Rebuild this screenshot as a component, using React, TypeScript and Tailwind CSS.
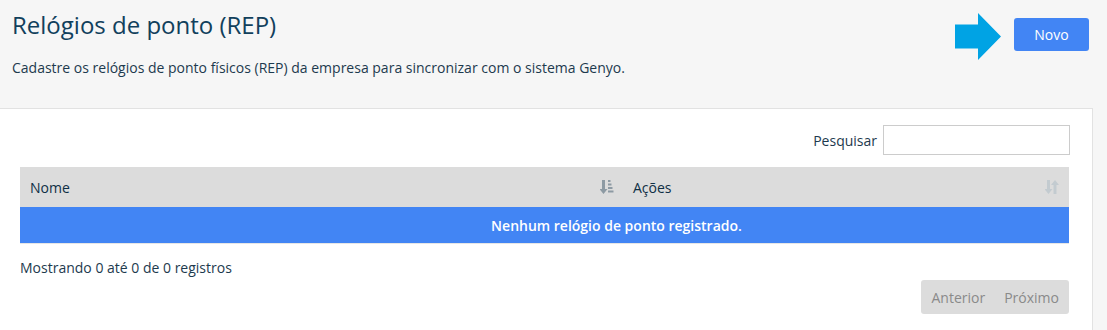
import React from 'react';

const SortAmountIcon: React.FC = () => (
  <svg width="14" height="16" viewBox="0 0 14 16" className="text-[#8d9aa3]">
    <path d="M1.5 1h3v9h2.5l-4 5-4-5h2.5z" fill="currentColor" transform="translate(0.5 0)" />
    <rect x="8" y="1" width="2.5" height="2" fill="currentColor" />
    <rect x="8" y="4.5" width="3.5" height="2" fill="currentColor" />
    <rect x="8" y="8" width="4.5" height="2" fill="currentColor" />
    <rect x="8" y="11.5" width="5.5" height="2" fill="currentColor" />
  </svg>
);

const SortBothIcon: React.FC = () => (
  <svg width="14" height="16" viewBox="0 0 14 16" className="text-[#c3cbd0]">
    <path d="M2 1h3v9h2.5l-4 5-4-5H2z" fill="currentColor" />
    <path d="M9 15h3V6h2.5l-4-5-4 5H9z" fill="currentColor" transform="translate(-0.5 0)" />
  </svg>
);

const Arrow: React.FC = () => (
  <svg width="47" height="47" viewBox="0 0 47 47">
    <path d="M0 11.5h23V0l23 23.5L23 47V35.5H0z" fill="#00a3e4" />
  </svg>
);

export default function App() {
  return (
    <div className="w-[1107px] h-[330px] overflow-hidden bg-[#f6f6f6] font-['Open_Sans',sans-serif] text-[#1d3a4e]">
      <div className="h-[108px] flex justify-between pl-[12px] pr-[18px]">
        <div className="pt-[8px]">
          <h1 className="text-[24px] leading-[34px] text-[#11405c]">Relógios de ponto (REP)</h1>
          <p className="mt-[16px] text-[14px] leading-[20px] text-[#1d3a4e]">
            Cadastre os relógios de ponto físicos (REP) da empresa para sincronizar com o sistema Genyo.
          </p>
        </div>
        <div className="flex items-start gap-[12px] pt-[13px]">
          <Arrow />
          <button className="mt-[5px] w-[75px] h-[33px] rounded-[3px] bg-[#4285f4] text-white text-[14px]">
            Novo
          </button>
        </div>
      </div>

      <div className="w-[1093px] h-[222px] bg-white border-t border-r border-[#e2e2e2] px-[20px] pt-[16px]">
        <div className="flex justify-end items-center gap-[6px] mr-[2px]">
          <span className="text-[14px] text-[#1d3a4e]">Pesquisar</span>
          <input className="w-[187px] h-[30px] border border-[#cccccc] outline-none" />
        </div>

        <div className="mt-[12px] mr-[3px] border-b border-[#e6e6e6]">
          <div className="flex h-[40px] bg-[#dcdcdc] text-[14px] text-[#0f2f45]">
            <div className="w-[604px] flex items-center justify-between pl-[10px] pr-[10px]">
              <span>Nome</span>
              <SortAmountIcon />
            </div>
            <div className="flex-1 flex items-center justify-between pl-[9px] pr-[10px]">
              <span>Ações</span>
              <SortBothIcon />
            </div>
          </div>
          <div className="h-[36px] bg-[#4285f4] flex items-center justify-center pl-[144px] text-white text-[14px] font-semibold">
            Nenhum relógio de ponto registrado.
          </div>
        </div>

        <div className="mt-[13px] text-[14px] text-[#1d3a4e]">Mostrando 0 até 0 de 0 registros</div>

        <div className="flex justify-end mr-[3px] mt-[2px]">
          <div className="flex h-[34px] rounded-[3px] bg-[#dcdcdc] text-[14px] text-[#8a8a8a]">
            <span className="px-[10px] flex items-center">Anterior</span>
            <span className="pl-[9px] pr-[10px] flex items-center">Próximo</span>
          </div>
        </div>
      </div>
    </div>
  );
}
